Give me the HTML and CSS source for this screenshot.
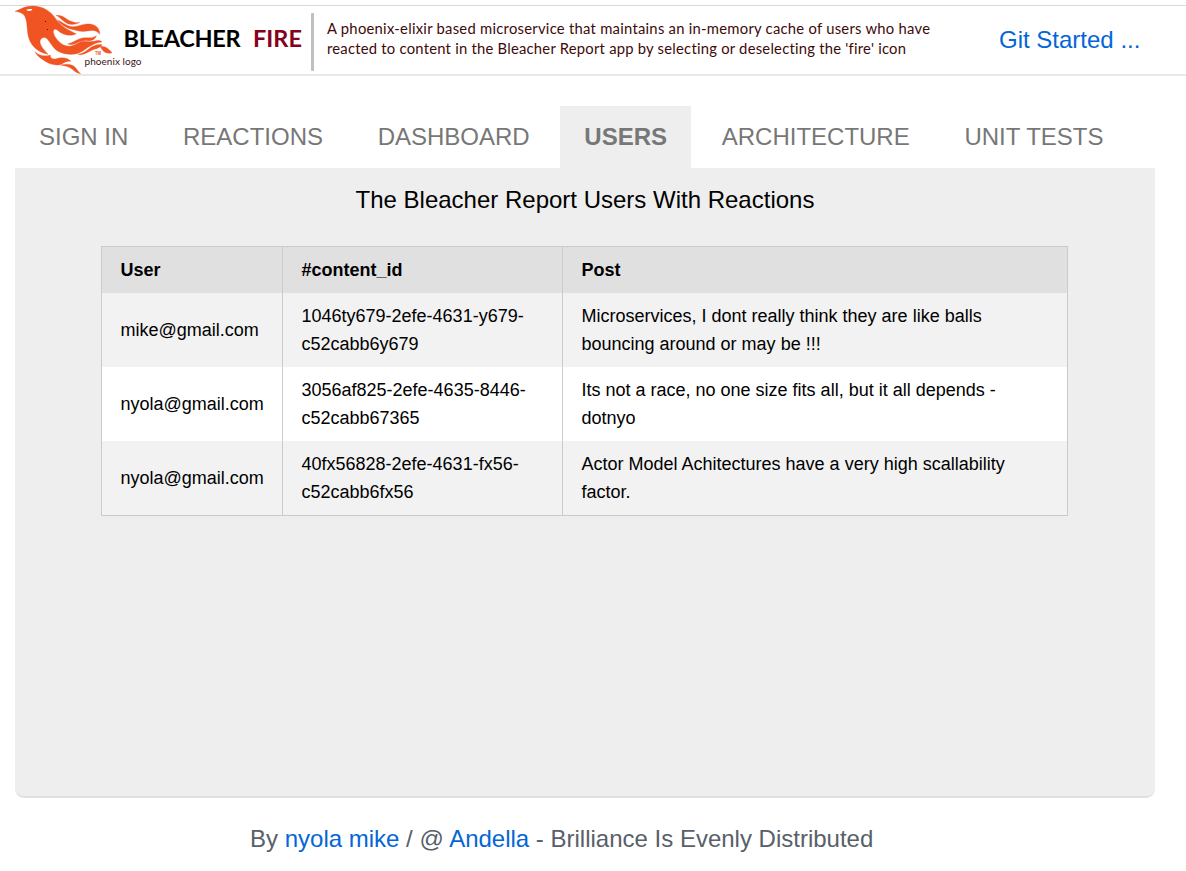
FILE: index.html
```html
<!DOCTYPE html>
<html lang="en">
<head>
<meta charset="utf-8">
<title>Bleacher Fire</title>
<link rel="stylesheet" href="styles.css">
</head>
<body>
<header class="header">
  <svg class="banner" width="940" height="68" viewBox="0 6 940 68">
    <g class="bird" transform="scale(.33333)">
      <path d="M45 34 C56 31 63 25 73 22 C96 15 120 18 139 29 C158 40 166 55 175 66 C190 84 210 91 229 102 C208 110 190 104 179 96 C172 89 165 85 161 90 C157 99 166 113 176 124 C195 144 216 141 234 129 C250 119 266 126 279 124 C291 122 298 118 306 126 C291 127 284 132 273 137 C256 145 247 158 226 162 C203 166 180 159 167 149 C156 139 151 126 141 116 C132 108 121 114 120 125 C121 140 135 151 144 163 C118 158 97 142 88 119 C79 96 84 66 74 48 C67 38 56 36 45 34 Z"/>
      <path d="M168 46 C191 44 198 60 214 64 C223 68 229 70 239 67 C229 74 213 75 203 71 C189 65 181 52 168 46 Z"/>
      <path d="M172 60 C190 67 201 80 219 80 C239 79 250 70 270 72 C290 75 300 87 299 103 C290 90 277 90 263 93 C243 97 228 91 212 87 C196 83 181 72 172 60 Z"/>
      <path d="M203 132 C220 126 228 121 239 116 C253 111 264 115 275 113 C283 111 289 108 289 107 C287 117 276 123 262 122 C246 119 235 128 223 132 C216 134 209 134 203 132 Z"/>
      <path d="M234 163 C249 161 257 154 266 147 C279 137 291 132 306 134 C300 145 288 145 277 150 C263 157 248 168 234 163 Z"/>
      <path d="M300 139 C316 138 328 147 336 159 C323 161 314 159 308 151 C305 147 302 143 300 139 Z"/>
      <path d="M105 155 C119 168 136 170 151 165 C150 176 159 178 169 176 C184 171 203 173 213 184 C199 181 191 190 180 194 C162 198 143 190 130 180 C118 172 110 166 105 155 Z"/>
      <path d="M181 195 C203 190 220 193 228 205 C234 213 237 218 242 221 C229 220 225 214 217 208 C209 201 196 197 181 195 Z"/>
      <path class="eye" d="M79 29 C84 26 91 27 97 27 C95 34 85 36 79 29 Z"/>
      <path class="speck" d="M135 63h3v3h-3z M141 87h3v3h-3z"/>
    </g>
    <text class="tm" x="95" y="54.500" textLength="6" lengthAdjust="spacingAndGlyphs">TM</text>
    <text class="logo-note" x="84.500" y="64.500" textLength="57">phoenix logo</text>
    <text class="brand" x="123.500" y="47" textLength="117">BLEACHER</text>
    <text class="brand brand-fire" x="253" y="47" textLength="49">FIRE</text>
    <rect class="divider" x="311" y="13" width="3" height="58" rx="1"/>
    <text class="tagline" x="327" y="34" textLength="603">A phoenix-elixir based microservice that maintains an in-memory cache of users who have</text>
    <text class="tagline" x="327" y="54" textLength="579">reacted to content in the Bleacher Report app by selecting or deselecting the 'fire' icon</text>
  </svg>
  <a class="link start">Git Started ...</a>
</header>
<main class="main">
  <nav class="tabs">
    <a class="tab">SIGN IN</a>
    <a class="tab">REACTIONS</a>
    <a class="tab">DASHBOARD</a>
    <a class="tab active">USERS</a>
    <a class="tab">ARCHITECTURE</a>
    <a class="tab">UNIT TESTS</a>
  </nav>
  <section class="panel">
    <h1 class="title">The Bleacher Report Users With Reactions</h1>
    <table class="users">
      <colgroup><col class="col-user"><col class="col-id"><col></colgroup>
      <thead>
        <tr><th>User</th><th>#content_id</th><th>Post</th></tr>
      </thead>
      <tbody>
        <tr><td>mike@gmail.com</td><td>1046ty679-2efe-4631-y679-<br>c52cabb6y679</td><td>Microservices, I dont really think they are like balls<br>bouncing around or may be !!!</td></tr>
        <tr><td>nyola@gmail.com</td><td>3056af825-2efe-4635-8446-<br>c52cabb67365</td><td>Its not a race, no one size fits all, but it all depends -<br>dotnyo</td></tr>
        <tr><td>nyola@gmail.com</td><td>40fx56828-2efe-4631-fx56-<br>c52cabb6fx56</td><td>Actor Model Achitectures have a very high scallability<br>factor.</td></tr>
      </tbody>
    </table>
  </section>
</main>
<footer class="footer">By <a class="link">nyola mike</a> / @ <a class="link">Andella</a> - Brilliance Is Evenly Distributed</footer>
</body>
</html>
```
FILE: styles.css
```css
* { box-sizing: border-box; }
body {
  margin: 0;
  padding-top: 5px;
  height: 871px;
  overflow: hidden;
  background: #fff;
  color: #000;
  font-family: "Liberation Sans", Arial, sans-serif;
  font-size: 24px;
}
.header {
  display: flex;
  height: 71px;
  border-top: 1px solid #d8d8d8;
  border-bottom: 2px solid #e8e8e8;
}
.banner { display: block; flex: none; overflow: visible; font-variant-ligatures: none; }
.bird { fill: #f05423; stroke: #f05423; stroke-width: 1; }
.bird .eye { fill: #fff; stroke: none; }
.bird .speck { fill: #501000; stroke: none; }
.tm { font: bold 4.5px "Liberation Sans", sans-serif; fill: #f05423; }
.logo-note { font: 10px Lato, sans-serif; fill: #3e1515; }
.brand { font: bold 23.5px Lato, sans-serif; fill: #000; }
.brand-fire { fill: #86001c; }
.divider { fill: #c0c0c0; }
.tagline { font: 14.8px Lato, sans-serif; fill: #3e0a0a; }
.logo-note, .brand, .tagline { font-variant-ligatures: none; }
.link { color: #0366d6; text-decoration: none; }
.start { margin-left: 59px; line-height: 68px; }
.main { width: 1140px; margin: 30px 0 0 15px; }
.tabs { display: flex; gap: 6.67px; height: 62px; }
.tab { padding: 0 24px; line-height: 62px; color: #777; }
.active { background: #eee; font-weight: bold; }
.panel {
  height: 630px;
  padding-top: 14px;
  background: #eee;
  border-bottom: 2px solid #e0e0e0;
  border-radius: 0 0 9px 9px;
}
.title {
  margin: 0 0 28px;
  font-size: 24px;
  font-weight: normal;
  line-height: 36px;
  text-align: center;
}
.users {
  width: 967px;
  margin-left: 86px;
  border: 1px solid #cbcbcb;
  border-spacing: 0;
  table-layout: fixed;
  font-size: 18px;
  line-height: 28px;
  text-align: left;
}
.col-user { width: 180px; }
.col-id { width: 280px; }
.users th, .users td { padding: 9px 18px 9px 18.5px; }
.users th { background: #e0e0e0; }
.users th + th, .users td + td { border-left: 1px solid #cbcbcb; }
.users td { background: #f2f2f2; }
.users tr:nth-child(even) td { background: #fff; }
.footer { padding: 23px 0 0 250px; line-height: 36px; color: #586069; }
```
